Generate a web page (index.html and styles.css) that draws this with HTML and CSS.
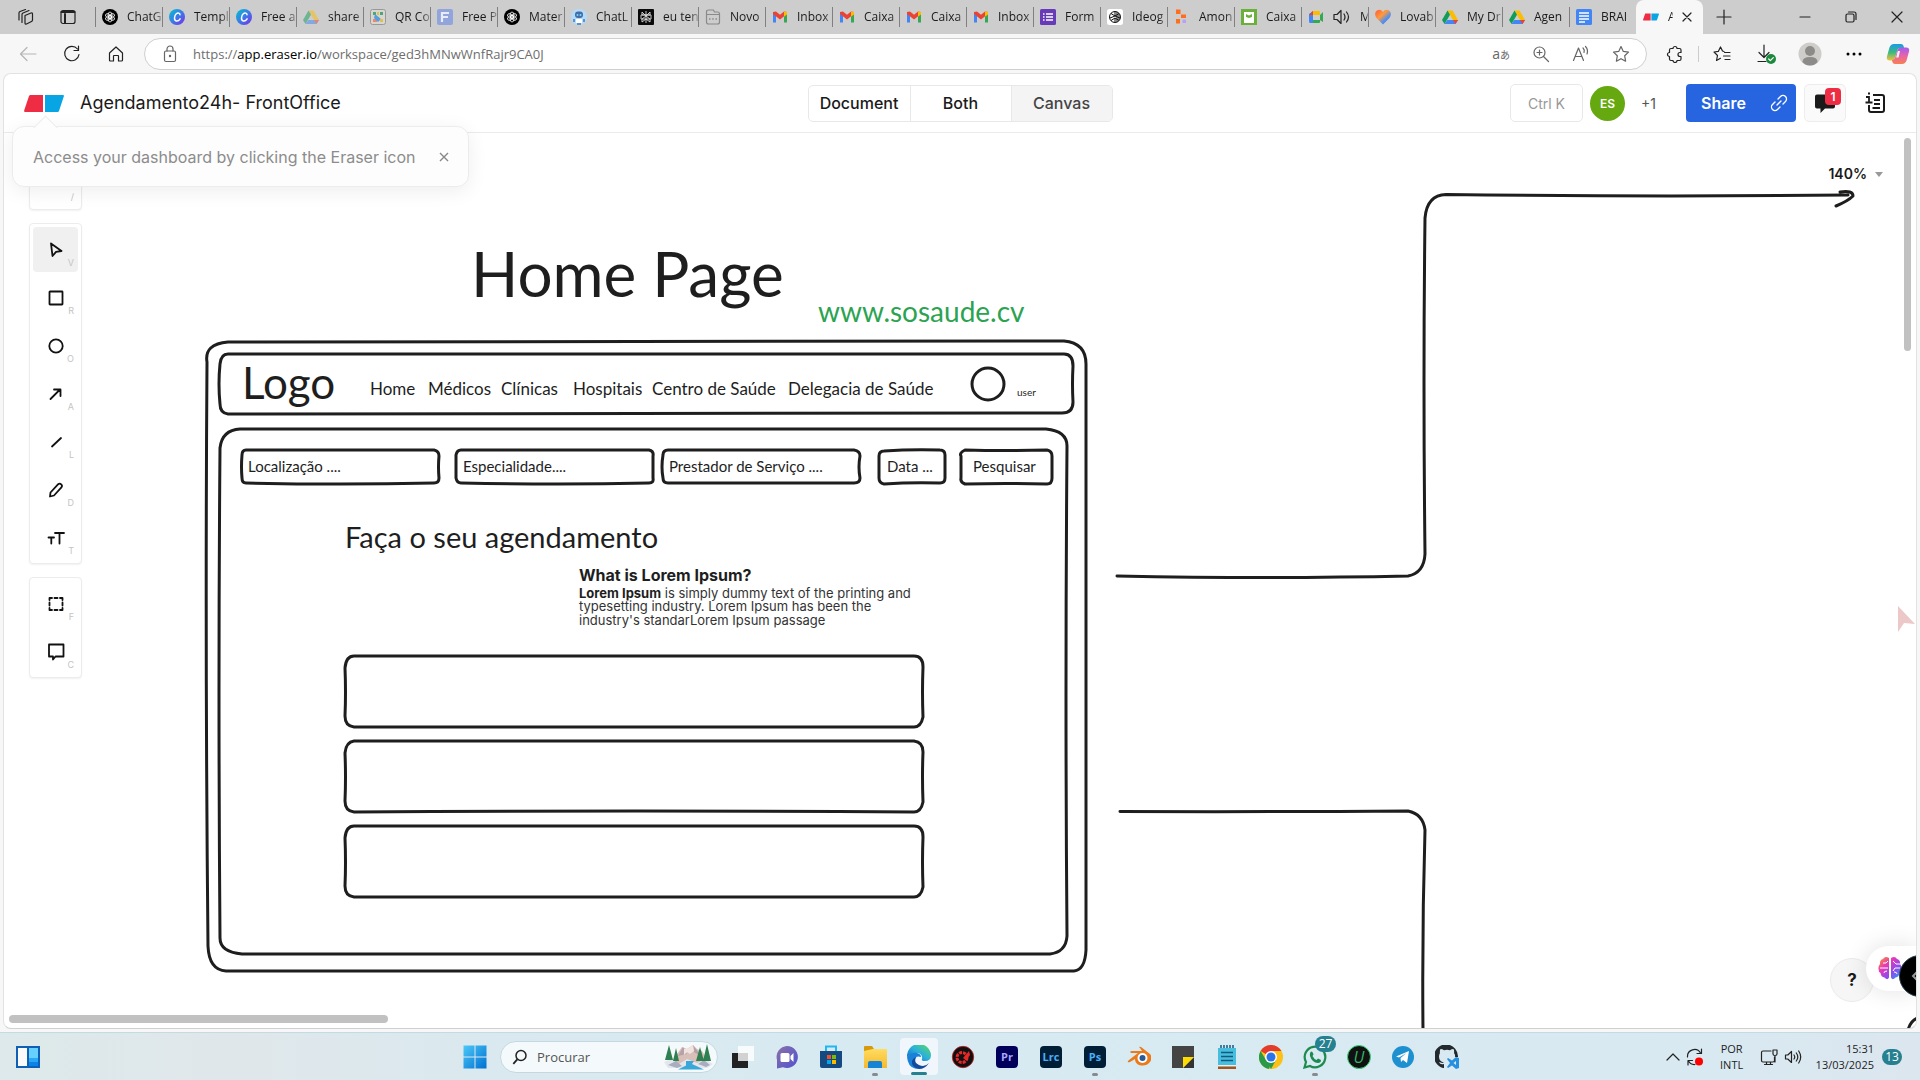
FILE: index.html
```html
<!DOCTYPE html>
<html lang="pt">
<head>
<meta charset="utf-8">
<meta name="viewport" content="width=device-width, initial-scale=1">
<title>Agendamento24h- FrontOffice</title>
<link rel="stylesheet" href="styles.css">
</head>
<body>
<svg class="defs" aria-hidden="true">
  <defs>
    <linearGradient id="g-canva" x1="0" y1="0" x2="1" y2="1"><stop offset="0" stop-color="#00c4cc"/><stop offset=".5" stop-color="#3b7be8"/><stop offset="1" stop-color="#7d2ae8"/></linearGradient>
    <linearGradient id="g-heart" x1="0" y1="0" x2="1" y2="1"><stop offset="0" stop-color="#ff5a3a"/><stop offset=".4" stop-color="#ff9a3a"/><stop offset=".65" stop-color="#5a90e8"/><stop offset="1" stop-color="#2f7de8"/></linearGradient>
    <linearGradient id="g-win" x1="0" y1="0" x2="1" y2="1"><stop offset="0" stop-color="#4cc8f8"/><stop offset="1" stop-color="#0070d0"/></linearGradient>
    <linearGradient id="g-cop-a" x1="0" y1="0" x2="0" y2="1"><stop offset="0" stop-color="#1a9be8"/><stop offset=".5" stop-color="#3aba80"/><stop offset="1" stop-color="#f4c23a"/></linearGradient>
    <linearGradient id="g-cop-b" x1="0" y1="0" x2="0" y2="1"><stop offset="0" stop-color="#a05cf0"/><stop offset=".5" stop-color="#e864a8"/><stop offset="1" stop-color="#f88050"/></linearGradient>
    <linearGradient id="g-brain" x1="0" y1="0" x2="1" y2="1"><stop offset="0" stop-color="#ff9a1f"/><stop offset=".35" stop-color="#e838b8"/><stop offset=".65" stop-color="#8a4af0"/><stop offset="1" stop-color="#22a8f8"/></linearGradient>
    <linearGradient id="g-edge" x1="0" y1="1" x2="1" y2="0"><stop offset="0" stop-color="#0c62c4"/><stop offset=".5" stop-color="#2bb0dc"/><stop offset="1" stop-color="#5ade5a"/></linearGradient>
    <linearGradient id="g-chat" x1="0" y1="0" x2="1" y2="1"><stop offset="0" stop-color="#8a70a8"/><stop offset="1" stop-color="#4f52d0"/></linearGradient>
    <linearGradient id="g-folder" x1="0" y1="0" x2="0" y2="1"><stop offset="0" stop-color="#ffdc60"/><stop offset="1" stop-color="#f5b92c"/></linearGradient>
    <symbol id="openai" viewBox="0 0 16 16"><circle cx="8" cy="8" r="8" fill="#000"/><g fill="none" stroke="#fff" stroke-width=".8"><ellipse cx="8" cy="6.2" rx="2" ry="3.2"/><ellipse cx="8" cy="9.8" rx="2" ry="3.2"/><ellipse cx="8" cy="6.2" rx="2" ry="3.2" transform="rotate(60 8 8)"/><ellipse cx="8" cy="6.2" rx="2" ry="3.2" transform="rotate(120 8 8)"/><ellipse cx="8" cy="6.2" rx="2" ry="3.2" transform="rotate(240 8 8)"/><ellipse cx="8" cy="6.2" rx="2" ry="3.2" transform="rotate(300 8 8)"/></g></symbol>
    <symbol id="canva" viewBox="0 0 16 16"><circle cx="8" cy="8" r="8" fill="url(#g-canva)"/><path d="M11 5.800C11 4 8.900 3.400 7.300 4.800 5 6.800 4.800 11.500 7.300 12c1.700.3 3-.9 3.800-2.200" fill="none" stroke="#fff" stroke-width="1.500" stroke-linecap="round"/></symbol>
    <symbol id="drive" viewBox="0 0 16 16"><path d="M5.500 1.500h5L16 11h-5z" fill="#fbbc04"/><path d="M5.500 1.500 8 5.800 2.500 15 0 11z" fill="#0f9d58"/><path d="M5.300 11H16l-2.500 4h-11z" fill="#4285f4"/><path d="M11 11h5l-2.500 4z" fill="#ea4335"/></symbol>
    <symbol id="gmail" viewBox="0 0 16 16"><path d="M1 4v9.500h3V6.500z" fill="#4285f4"/><path d="M15 4v9.500h-3V6.500z" fill="#34a853"/><path d="m1 3 3-.5 4 3.300 4-3.300 3 .5v2L8 10.500 1 5z" fill="#ea4335"/><path d="m12 2.500 3 .5v2.500l-3 2.300z" fill="#fbbc04"/></symbol>
    <symbol id="eraser" viewBox="0 0 40 17"><path d="M6 0h13v17H1Q-.3 17 .3 15L5 1z" fill="#ee2d45"/><path d="M21 0h18q1.300 0 .8 1.500L35 16q-.3 1-1.500 1H21z" fill="#08a5e5"/></symbol>
  </defs>
</svg>

<div class="tabstrip">
  <button class="strip-btn" aria-label="Workspaces"><svg viewBox="0 0 18 18" class="i18 line"><path d="M8 7.500 14 5q1.500-.5 1.500 1v6q0 1-1 1.500L9.500 16Q8 16.500 8 15zM5 14.500v-8q0-1 1-1.500l6-2.500M2 12V5q0-1 1-1.500l5.500-2"/></svg></button>
  <button class="strip-btn" aria-label="Vertical tabs"><svg viewBox="0 0 18 18" class="i18 line"><rect x="2" y="2.500" width="14" height="13" rx="2"/><path d="M6 6v9M2.500 4h13" stroke-width="2"/></svg></button>
  <nav class="tabs" aria-label="Tabs">
    <button class="tab"><svg class="fav"><use href="#openai"/></svg><span>ChatG</span></button>
    <button class="tab"><svg class="fav"><use href="#canva"/></svg><span>Templ</span></button>
    <button class="tab"><svg class="fav"><use href="#canva"/></svg><span>Free a</span></button>
    <button class="tab"><svg class="fav dim"><use href="#drive"/></svg><span>share</span></button>
    <button class="tab"><svg class="fav" viewBox="0 0 16 16"><rect x=".5" y=".5" width="15" height="15" rx="2" fill="#d9d5cf" stroke="#999"/><path d="M3 3h3v3H3zM10 3h3v3h-3z" fill="#4aa77a"/><path d="M3 10h4v3H3z" fill="#e88a6a"/><path d="m5 5 6 5-3 3-4-4z" fill="#559ee0"/><path d="M10 10h3v3h-3zM7 3h2v3H7z" fill="#e0c050"/></svg><span>QR Co</span></button>
    <button class="tab"><svg class="fav" viewBox="0 0 16 16"><rect width="16" height="16" rx="2" fill="#91a4dc"/><path d="M5 13V4h7M5 8h6" stroke="#e8ecfa" stroke-width="2.200" fill="none"/></svg><span>Free P</span></button>
    <button class="tab"><svg class="fav"><use href="#openai"/></svg><span>Mater</span></button>
    <button class="tab"><svg class="fav" viewBox="0 0 16 16"><circle cx="8" cy="8" r="8" fill="#b4dcf8"/><rect x="4" y="2.500" width="8" height="6.500" rx="3" fill="#456ba8"/><path d="M5 10h6v4H5z" fill="#fff"/><circle cx="6.500" cy="6" r="1" fill="#7df"/><circle cx="9.500" cy="6" r="1" fill="#7df"/><path d="M3 10v3M13 10v3M6 15h4" stroke="#3a78c8" stroke-width="1.500"/></svg><span>ChatL</span></button>
    <button class="tab"><svg class="fav" viewBox="0 0 16 16"><rect width="16" height="16" rx="1" fill="#0a0a0a"/><path d="M8 2v12M4 3l4 4 4-4v3H4zM3 6h10v4H3zM4 13v-3l4-3 4 3v3l-4-3z" fill="none" stroke="#ddd" stroke-width=".9"/></svg><span>eu ten</span></button>
    <button class="tab"><svg class="fav" viewBox="0 0 16 16"><g fill="none" stroke="#8a8a8a" stroke-width="1.200"><path d="M3.500 1h5l1 2h3Q14.500 3 14.500 5v8q0 2-2 2h-9q-2 0-2-2V3q0-2 2-2zM1.500 5.500h13"/><path d="M4 10h1.500M7.200 10h1.500M10.500 10H12" stroke-width="1.600"/></g></svg><span>Novo</span></button>
    <button class="tab"><svg class="fav"><use href="#gmail"/></svg><span>Inbox</span></button>
    <button class="tab"><svg class="fav"><use href="#gmail"/></svg><span>Caixa</span></button>
    <button class="tab"><svg class="fav"><use href="#gmail"/></svg><span>Caixa</span></button>
    <button class="tab"><svg class="fav"><use href="#gmail"/></svg><span>Inbox</span></button>
    <button class="tab"><svg class="fav" viewBox="0 0 16 16"><rect width="16" height="16" rx="1.500" fill="#673ab7"/><path d="M3 5h1.500M3 8h1.500M3 11h1.500M6 5h7M6 8h7M6 11h7" stroke="#fff" stroke-width="1.600"/></svg><span>Form</span></button>
    <button class="tab"><svg class="fav" viewBox="0 0 16 16"><rect width="16" height="16" rx="2.500" fill="#fff"/><g fill="none" stroke="#111" stroke-width="1"><circle cx="8" cy="8" r="5.500"/><path d="M4 4.500 8 7l4-2.500M8 2.500V7M3 9l5-2 5 2M8 13.500V9l4 2.500M8 9l-4 2.500M10 3v10M12 5v6"/></g></svg><span>Ideog</span></button>
    <button class="tab"><svg class="fav" viewBox="0 0 16 16"><path d="M2 .5h4.500V5H2zM7 5.500h5V9H7zM2 10h4v4.500H2z" fill="#ff6d1f"/><path d="M8.500 10.500H12V14H8.500z" fill="#b8a0f8"/></svg><span>Amon</span></button>
    <button class="tab"><svg class="fav" viewBox="0 0 16 16"><rect width="16" height="16" fill="#6ab03a"/><rect x="3" y="3" width="10" height="11" fill="#fff"/><path d="m5 5 3 1.500 3-1.500v3L8 9 5 8z" fill="#6ab03a"/></svg><span>Caixa</span></button>
    <button class="tab"><svg class="fav" viewBox="0 0 16 16"><path d="M1 5l4-3h6v3H5v9H2.500Q1 14 1 12.500z" fill="#4285f4"/><path d="M5 2h6q1 0 1 1v3H5z" fill="#fbbc04"/><path d="M5 2v4H1z" fill="#ea4335"/><path d="M5 11h7l3 2V3l-3 3v7q0 1-1 1H5z" fill="#34a853"/></svg><svg class="speaker line" viewBox="0 0 18 16"><path d="M1 5.500h3l4-4v13l-4-4H1zM11 5q2 3 0 6M13.500 3q4 5 0 10"/></svg><span>M</span></button>
    <button class="tab"><svg class="fav" viewBox="0 0 16 16"><path d="M8 15.500 1.500 9Q-1.500 4 2 1.500 5.500-.5 8 3q2.500-3.500 6-1.500 3.500 2.500.5 7.500z" fill="url(#g-heart)"/></svg><span>Lovab</span></button>
    <button class="tab"><svg class="fav"><use href="#drive"/></svg><span>My Dr</span></button>
    <button class="tab"><svg class="fav"><use href="#drive"/></svg><span>Agen</span></button>
    <button class="tab"><svg class="fav" viewBox="0 0 16 16"><rect width="16" height="16" rx="1.500" fill="#4285f4"/><path d="M3 4h10M3 7h10M3 10h10M3 13h6" stroke="#fff" stroke-width="1.400"/></svg><span>BRAI</span></button>
    <button class="tab active"><svg class="fav"><use href="#eraser"/></svg><span>A</span><svg class="tab-close line" viewBox="0 0 10 10"><path d="m1 1 8 8M9 1 1 9"/></svg></button>
  </nav>
  <button class="strip-btn plus" aria-label="New tab"><svg viewBox="0 0 18 18" class="i18 line"><path d="M9 2v14M2 9h14"/></svg></button>
  <div class="window-controls">
    <button aria-label="Minimize"><svg viewBox="0 0 12 12" class="i12 line"><path d="M1 6h10"/></svg></button>
    <button aria-label="Restore"><svg viewBox="0 0 12 12" class="i12 line"><rect x="1" y="3" width="8" height="8" rx="1.500"/><path d="M3.500 1H9q2 0 2 2v5.500"/></svg></button>
    <button aria-label="Close"><svg viewBox="0 0 12 12" class="i12 line"><path d="m1 1 10 10M11 1 1 11"/></svg></button>
  </div>
</div>

<div class="browserbar">
  <button aria-label="Back" class="faded"><svg viewBox="0 0 18 18" class="i18 line"><path d="M17 9H1.500M8 2.500 1.500 9 8 15.500"/></svg></button>
  <button aria-label="Refresh"><svg viewBox="0 0 18 18" class="i18 line"><path d="M16 9.500A7.200 7.200 0 1 1 14.500 4M15.500 1v4.500H11"/></svg></button>
  <button aria-label="Home"><svg viewBox="0 0 18 18" class="i18 line"><path d="M2.500 8 9 2l6.500 6v7q0 1-1 1h-3v-5q0-.5-.5-.5H7q-.5 0-.5.500v5h-3q-1 0-1-1z"/></svg></button>
  <div class="address">
    <svg viewBox="0 0 14 18" class="lock line"><rect x="1.500" y="6" width="11" height="10.500" rx="1.500"/><path d="M4 6V4a3 3 0 0 1 6 0v2"/><circle cx="7" cy="11" r=".6" fill="#555"/></svg>
    <a class="url" href="https://app.eraser.io/workspace/ged3hMNwWnfRajr9CA0J">https://<b>app.eraser.io</b>/workspace/ged3hMNwWnfRajr9CA0J</a>
    <button aria-label="Translate" class="glyph">a<small>あ</small></button>
    <button aria-label="Zoom"><svg viewBox="0 0 18 18" class="i18 line"><circle cx="7.500" cy="7.500" r="5.500"/><path d="m11.500 11.500 5 5M7.500 5v5M5 7.500h5"/></svg></button>
    <button aria-label="Read aloud"><svg viewBox="0 0 18 18" class="i18 line"><path d="M1.500 15.500 6.500 3l5 12.500M3.300 11.500h6.400M11 3q2 2 1 4.500M13.500 1.500q3 3 1.500 7.500"/></svg></button>
    <button aria-label="Favorite"><svg viewBox="0 0 18 18" class="i18 line"><path d="m9 1.500 2.300 4.900 5.200.7-3.800 3.700.9 5.400L9 13.700l-4.600 2.500.9-5.400L1.500 7.100l5.200-.7z"/></svg></button>
  </div>
  <div class="extras">
    <button aria-label="Extensions"><svg viewBox="0 0 18 18" class="i18 line dark"><path d="M5 3.500h2a2 2 0 0 1 4 0h2.500q1.500 0 1.500 1.500v2.500h-1a2 2 0 0 0 0 4h1V14q0 1.500-1.500 1.500H11a2 2 0 0 1-4 0H5q-1.500 0-1.500-1.500v-2.500a2 2 0 0 1 0-4V5q0-1.500 1.500-1.500z"/></svg></button>
    <i class="rule"></i>
    <button aria-label="Favorites"><svg viewBox="0 0 18 18" class="i18 line dark"><path d="M11 6.500 9.500 6 7.500 2 5.300 6.400 1 7l3.500 3.500-1 5 4-2.200M11.500 7.500H17M10.500 11H17M12 14.500h5"/></svg></button>
    <button aria-label="Downloads"><svg viewBox="0 0 20 20" class="i20 line dark"><path d="M8 1v12M3 8.500 8 13.500l5-5M2 17.500h8"/><circle cx="15" cy="15" r="5" fill="#1b8a3d" stroke="none"/><path d="m12.700 15 1.600 1.600 3-3" stroke="#fff"/></svg></button>
    <button aria-label="Profile"><svg viewBox="0 0 24 24" class="i24"><circle cx="12" cy="12" r="11.500" fill="#cfcdca"/><circle cx="12" cy="9" r="5" fill="#8d8b89"/><path d="M4.500 20q0-5 7.500-5t7.500 5q-3 3.500-7.500 3.500T4.500 20z" fill="#8d8b89"/></svg></button>
    <button aria-label="Menu"><svg viewBox="0 0 18 18" class="i18"><circle cx="3" cy="9" r="1.500"/><circle cx="9" cy="9" r="1.500"/><circle cx="15" cy="9" r="1.500"/></svg></button>
    <button aria-label="Copilot"><svg viewBox="0 0 24 24" class="i24"><path d="M8 2h7q2 0 2.700 2.200L18 6h-4q-2 0-2.600 2L9 16q-.8 2.500-3 2.500H4q-4 0-3-4L3.300 6Q4.500 2 8 2z" fill="url(#g-cop-a)"/><path d="M16 22H9q-2 0-2.700-2.200L6 18q2.400 0 3-2l2.400-8q.8-2.500 3-2.500H20q4 0 3 4L20.700 18q-1.200 4-4.700 4z" fill="url(#g-cop-b)"/><path d="m11.800 9-1.600 6.500h2.300L14 9z" fill="#f7f7f7"/></svg></button>
  </div>
</div>

<main class="page">
  <header class="app-header">
    <div class="brand">
      <a href="#dashboard" aria-label="Eraser"><svg class="logo"><use href="#eraser"/></svg></a>
      <h1>Agendamento24h- FrontOffice</h1>
      <div class="hint" role="status">
        <span>Access your dashboard by clicking the Eraser icon</span>
        <button aria-label="Dismiss"><svg viewBox="0 0 10 10" class="i10"><path d="m1 1 8 8M9 1 1 9" stroke="#888" stroke-width="1.400"/></svg></button>
      </div>
    </div>
    <div class="segmented">
      <button>Document</button><button>Both</button><button class="on">Canvas</button>
    </div>
    <div class="actions">
      <button class="kbd">Ctrl K</button>
      <span class="person">ES</span>
      <span class="more">+1</span>
      <button class="share"><span>Share</span><svg viewBox="0 0 18 18" class="i18"><path d="m7 11 4-4M8 5l2.500-2.500a3.200 3.200 0 0 1 5 5L13 10M10 13l-2.500 2.500a3.200 3.200 0 0 1-5-5L5 8" fill="none" stroke="#fff" stroke-width="1.300" stroke-linecap="round"/></svg></button>
      <button class="comments" aria-label="Comments"><svg viewBox="0 0 22 22" class="i22"><path d="M3 2.500h16q2 0 2 2v10q0 2-2 2H11L6.500 21v-4.500H3q-2 0-2-2v-10q0-2 2-2z" fill="#1a1a1a"/></svg><span class="count">1</span></button>
      <button class="info" aria-label="Info"><svg viewBox="0 0 22 22" class="i22"><path d="M9 3h9q2 0 2 2v13q0 2-2 2H7q-2 0-2-2v-5M10 8h6M10 12h6M8.500 16H16" fill="none" stroke="#1a1a1a" stroke-width="2"/><path d="M2 5h3v5M1.500 10.500h7M4 1.500h2" fill="none" stroke="#1a1a1a" stroke-width="1.800"/></svg></button>
    </div>
  </header>

  <section class="canvas">
    <svg class="board" viewBox="4 133 1912 895">
      <g class="ink">
        <path d="M228 342 Q640 340 1064 341 Q1086 343 1086 364 Q1085 660 1086 950 Q1085 970 1074 971 Q640 972 226 971 Q209 970 208 946 Q205 650 207 362 Q204 344 228 342z"/>
        <path d="M228 354H1064Q1073 354 1073 366Q1072 384 1073 402Q1073 413 1062 413Q640 413 228 414Q220 413 220 404Q218 384 220 364Q221 354 228 354z"/>
        <path d="M240 429Q650 428 1046 429Q1067 431 1067 446Q1065 700 1067 936Q1066 952 1050 954Q640 955 242 954Q220 952 220 938Q218 690 220 448Q222 430 240 429z"/>
        <path d="M246 450H434Q439 451 439 456Q438 467 439 478Q439 483 434 483Q340 485 246 483Q242 483 242 478Q241 467 242 455Q242 450 246 450z"/>
        <path d="M461 450H649Q654 451 653 456V478Q654 483 649 483Q560 485 461 483Q457 483 456 478V455Q457 450 461 450z"/>
        <path d="M668 450H854Q860 451 860 456Q858 467 860 478Q860 483 854 483H668Q663 483 663 478Q661 467 663 455Q663 450 668 450z"/>
        <path d="M884 451Q912 449 940 450Q945 450 945 455V478Q945 483 940 483Q912 482 884 484Q879 483 879 478V456Q879 451 884 451z"/>
        <path d="M965 450Q1005 451 1047 450Q1052 451 1052 456V478Q1052 484 1047 484Q1005 483 965 484Q960 482 961 478V456Q959 453 965 450z"/>
        <circle cx="988" cy="384" r="16"/>
        <path d="M354 656H914Q923 656 923 667Q922 692 923 717Q921 727 914 727H354Q345 726 345 716Q346 692 345 668Q346 656 354 656z"/>
        <path d="M354 741H914Q923 742 923 752Q922 777 923 802Q921 812 914 812Q640 810 354 812Q345 811 345 801Q346 777 345 753Q346 742 354 741z"/>
        <path d="M354 826H914Q923 826 923 837Q922 862 923 887Q921 897 914 897H354Q345 896 345 886Q346 862 345 838Q346 826 354 826z"/>
        <path d="M1117 576Q1270 579 1408 576Q1424 573 1425 554Q1423 380 1425 218Q1427 195 1446 194.500Q1650 197 1848 195M1840 192Q1853 190 1853 196 1848 201 1836 206"/>
        <path d="M1120 811.500Q1260 812 1408 811Q1423 814 1425 830Q1422 930 1423 1030M1908 1030Q1911 1020 1918 1018"/>
      </g>
      <g class="hand">
        <text class="t62" x="471" y="297">Home Page</text>
        <text class="t28 green" x="818" y="322">www.sosaude.cv</text>
        <text class="t44" x="242" y="399">Logo</text>
        <text class="t17" x="370" y="395">Home</text>
        <text class="t17" x="428" y="395">Médicos</text>
        <text class="t17" x="501" y="395">Clínicas</text>
        <text class="t17" x="573" y="395">Hospitais</text>
        <text class="t17" x="652" y="395">Centro de Saúde</text>
        <text class="t17" x="788" y="395">Delegacia de Saúde</text>
        <text class="t10" x="1017" y="396">user</text>
        <text class="t15" x="248" y="472">Localização ....</text>
        <text class="t15" x="463" y="472">Especialidade....</text>
        <text class="t15" x="669" y="472">Prestador de Serviço ....</text>
        <text class="t15" x="887" y="472">Data ...</text>
        <text class="t15" x="973" y="472">Pesquisar</text>
        <text class="t29" x="345" y="548">Faça o seu agendamento</text>
      </g>
      <g class="note">
        <text class="note-title" x="579" y="581">What is Lorem Ipsum?</text>
        <text x="579" y="598"><tspan class="strong">Lorem Ipsum</tspan> is simply dummy text of the printing and</text>
        <text x="579" y="611">typesetting industry. Lorem Ipsum has been the</text>
        <text x="579" y="625">industry's standarLorem Ipsum passage</text>
      </g>
      <path d="M1898 606 1915 624 1904 623 1898 632z" fill="#ecc8c9"/>
    </svg>

    <aside class="rail" aria-label="Tools">
      <div class="toolbox">
        <button aria-label="Insert"><svg viewBox="0 0 18 18" class="i18 tool"><path d="M9 1v10M4 6h10"/></svg><kbd>/</kbd></button>
      </div>
      <div class="toolbox">
        <button class="on" aria-label="Select"><svg viewBox="0 0 18 18" class="i18 tool"><path d="m4 2.500 10.500 7.500-5.500.8L5.500 15z"/></svg><kbd>V</kbd></button>
        <button aria-label="Rectangle"><svg viewBox="0 0 18 18" class="i18 tool"><rect x="2.500" y="2.500" width="13" height="13" rx=".5"/></svg><kbd>R</kbd></button>
        <button aria-label="Ellipse"><svg viewBox="0 0 18 18" class="i18 tool"><circle cx="9" cy="9" r="6.700"/></svg><kbd>O</kbd></button>
        <button aria-label="Arrow"><svg viewBox="0 0 18 18" class="i18 tool"><path d="m3.500 14 9.500-9.500M7 4.500h6.500V11"/></svg><kbd>A</kbd></button>
        <button aria-label="Line"><svg viewBox="0 0 18 18" class="i18 tool"><path d="m5 13.500 9-8.500"/></svg><kbd>L</kbd></button>
        <button aria-label="Draw"><svg viewBox="0 0 18 18" class="i18 tool"><path d="m3 15.500.5-4L11.200 3.200q1.500-1.200 3 .2t.2 3L7 14.500z"/></svg><kbd>D</kbd></button>
        <button aria-label="Text"><svg viewBox="0 0 18 18" class="i18 tool"><path d="M8 4h9M12.500 4v10.500M1.500 8.500H7M4.300 8.500v6"/></svg><kbd>T</kbd></button>
      </div>
      <div class="toolbox">
        <button aria-label="Figure"><svg viewBox="0 0 18 18" class="i18 tool"><path d="M2.500 5V3H5M7.500 3h3M13 3h2.500v2M15.500 7.500v3M15.500 13v2H13M10.500 15h-3M5 15H2.500v-2M2.500 10.500v-3"/></svg><kbd>F</kbd></button>
        <button aria-label="Comment"><svg viewBox="0 0 18 18" class="i18 tool"><path d="M2 1.500h14.500v12H8.500L6 16.500v-3H2z"/></svg><kbd>C</kbd></button>
      </div>
    </aside>

    <button class="zoom">140% <span class="caret"></span></button>
    <div class="scroll-y"></div>
    <div class="scroll-x"></div>
    <button class="help">?</button>
    <div class="brain"><svg viewBox="0 0 24 24" class="i24"><path d="M11 2Q7-.5 5 3 1.500 4 2 8q-2 2.500-1.500 5 0 3 2 4 .5 4 4 4.500 3 3.500 4.500 0zM13 2q4-2.500 6 1 3.500 1 3 5 2 2.500 1.500 5 0 3-2 4-.5 4-4 4.500-3 3.500-4.500 0z" fill="url(#g-brain)"/><path d="M2 12h8M5 7h3l2-2M6 17q0-2 3-2M22 8h-4l-3-3M22 12h-5l-2 3M19 18q0-2-3-2" fill="none" stroke="#fff"/></svg></div>
    <button class="drawer" aria-label="Open panel"><svg viewBox="0 0 18 18" class="i18"><path d="M10 3 4 9l6 6" fill="none" stroke="#999" stroke-width="2"/></svg></button>
  </section>
</main>

<footer class="taskbar">
  <div class="task-left"><button class="app" aria-label="Widgets"><svg viewBox="0 0 24 24" class="i24"><path d="M0 1h24v22H0z" fill="#0f5fb4"/><path d="M2 3h9v18H2z" fill="#fafafa"/><path d="M13 3h9v10h-9z" fill="#66d0ff"/><path d="M13 13h9v4h-9z" fill="#2aa8f5"/><path d="M13 17h9v4h-9z" fill="#0a84e8"/></svg></button></div>
  <div class="apps">
    <button class="app" aria-label="Start"><svg viewBox="0 0 24 24" class="i24"><path d="M.5.5h11v11H.5zM12.500.5h11v11h-11zM.5 12.500h11v11H.5zM12.500 12.500h11v11h-11z" fill="url(#g-win)"/></svg></button>
    <label class="search"><svg viewBox="0 0 16 16" class="i16"><circle cx="9" cy="6.500" r="5" fill="none" stroke="#222" stroke-width="1.500"/><path d="m5.300 10.300-4 4.500" stroke="#222" stroke-width="1.800"/></svg><input type="text" placeholder="Procurar" aria-label="Procurar">
      <svg class="scene" viewBox="0 0 49 26"><path d="M6 20 18 3l5 2 6-4 4 4 5 2 8 13z" fill="#d8bfb8"/><path d="m14 12 5-9 4 7zM29 1l9 12-8-5z" fill="#b8a0a8"/><path d="m20 5 3 0 6-4 1 6-4 3-3-2-3 3z" fill="#f0e4e0"/><path d="m0 18 7-3 8 5 8-5 10 4 8-4 8 5-6 4H4z" fill="#e4e6ee"/><path d="m4 21 8-4 6 5-5 2zM34 20l6-4 6 5-4 2z" fill="#a8adc0"/><path d="M22 17h8l-2 3 12 5.500H14l8-4z" fill="#39a8d8"/><g fill="#2f8050"><path d="m5 1 4 15H1zM12 4l3 13H9zM36 3l4 14h-8zM43 0l4 17h-8z"/></g></svg></label>
    <button class="app" aria-label="Task view"><svg viewBox="0 0 24 24" class="i24"><rect x="1" y="8" width="16" height="15" fill="#222"/><rect x="7" y="1" width="16" height="15" fill="#fff" opacity=".8"/></svg></button>
    <button class="app" aria-label="Chat"><svg viewBox="0 0 24 24" class="i24"><path d="M12 1a11 11 0 1 1-4 21.300L2 23.500V15A11 11 0 0 1 12 1z" fill="url(#g-chat)"/><rect x="5.500" y="8" width="9" height="9" rx="1.500" fill="#fff"/><path d="m15.500 11 3-3v9l-3-3z" fill="#fff"/></svg></button>
    <button class="app" aria-label="Store"><svg viewBox="0 0 24 24" class="i24"><path d="M7 7V1.500h10V7" fill="none" stroke="#20b8f0" stroke-width="2"/><path d="M1 6h22v15q0 2-2 2H3q-2 0-2-2z" fill="#154a80"/><path d="M8 10h4v4H8z" fill="#f25022"/><path d="M13 10h4v4h-4z" fill="#7fba00"/><path d="M8 15h4v4H8z" fill="#00a4ef"/><path d="M13 15h4v4h-4z" fill="#ffb900"/></svg></button>
    <button class="app running" aria-label="Explorer"><svg viewBox="0 0 24 24" class="i24"><path d="M1 2q0-1 1-1h7l2 3v4H1z" fill="#d69a0c"/><path d="M1 6l9-2h13q1 0 1 1v18H1z" fill="url(#g-folder)"/><path d="M5 23v-5q0-2 2-2h10q2 0 2 2v5z" fill="#1583d6"/></svg></button>
    <button class="app current" aria-label="Edge"><svg viewBox="0 0 24 24" class="i24"><path d="M0 12A12 12 0 0 1 24 10q0 6-6 6-4 0-3-2 1-5-5-6-6 0-10 4z" fill="url(#g-edge)"/><path d="M0 12Q4 7 10 8q4 1 4 4-6-2-6 4 1 5 8 6-4 2.500-8 1.500Q1 22 0 12z" fill="#1a80d8"/><path d="M9 12q-3 5 3 8 6 2.500 10-2-4 6-10 6Q4 22 5 16q1-3 4-4z" fill="#124a9c"/></svg></button>
    <button class="app" aria-label="Recorder"><svg viewBox="0 0 24 24" class="i24"><circle cx="12" cy="12" r="10.700" fill="#111" stroke="#c42020" stroke-width=".8"/><circle cx="11" cy="12.500" r="5" fill="none" stroke="#e82828" stroke-width="3" stroke-dasharray="3 1"/><path d="m12 13 6-7 1 4-4 5z" fill="#e82828"/></svg></button>
    <button class="app" aria-label="Premiere"><span class="adobe pr">Pr</span></button>
    <button class="app" aria-label="Lightroom"><span class="adobe">Lrc</span></button>
    <button class="app running" aria-label="Photoshop"><span class="adobe">Ps</span></button>
    <button class="app" aria-label="Blender"><svg viewBox="0 0 24 24" class="i24"><path d="M13 3q-2-2 1-1l9 7q3 4 0 8-4 5-11 3-4-2-4-6l-5 3q-4 1-1-2l9-7H4q-2-2 1-2h10z" fill="#ea7a1a"/><circle cx="15.500" cy="13" r="5" fill="#fff"/><circle cx="15.500" cy="13" r="3" fill="#285a98"/></svg></button>
    <button class="app" aria-label="Sticky notes"><svg viewBox="0 0 24 24" class="i24"><path d="M1 1h22v11l-11 11H1z" fill="#444"/><path d="M23 12v11H12z" fill="#333"/><path d="M12 12h11L12 23z" fill="#ffdc00"/></svg></button>
    <button class="app" aria-label="Notepad"><svg viewBox="0 0 24 24" class="i24"><path d="M3 3h18v17H3z" fill="#48bede"/><path d="M3 20h18v1H3z" fill="#eee"/><path d="M3 21.500h18V24H3z" fill="#a4541a"/><path d="M6 7.500h12M6 11.500h12M6 15.500h12" stroke="#125a80" stroke-width="1.500"/><path d="M6 0v3M9 0v3M12 0v3M15 0v3M18 0v3" stroke="#125a80" stroke-width="1.500"/></svg></button>
    <button class="app" aria-label="Chrome"><svg viewBox="0 0 24 24" class="i24"><circle cx="12" cy="12" r="12" fill="#fbc116"/><path d="M12 12 1.600 6A12 12 0 0 1 22.400 6H12z" fill="#e33b2e"/><path d="M1.600 6 7 15l5 3-2 6A12 12 0 0 1 1.600 6z" fill="#2a9a48"/><path d="M12 24 17 15H7z" fill="#2a9a48"/><circle cx="12" cy="12" r="6" fill="#fff"/><circle cx="12" cy="12" r="4.500" fill="#2a74e8"/></svg></button>
    <button class="app running" aria-label="WhatsApp"><svg viewBox="0 0 24 24" class="i24"><path d="M1.500 22.500 3 17A10.300 10.300 0 1 1 7 21z" fill="none" stroke="#1d8a4e" stroke-width="2.200"/><path d="M7.500 7q1.500-1.500 2.500 1l.5 1.500-1 1.500q1.500 3 4 4l1.500-1.500 3 1.500q0 3-3 3-6-.5-8-7-.5-2 .5-4z" fill="#1d8a4e"/></svg><span class="badge">27</span></button>
    <button class="app" aria-label="Uninstaller"><span class="round-u">U</span></button>
    <button class="app" aria-label="Telegram"><svg viewBox="0 0 24 24" class="i24"><circle cx="12" cy="12" r="11" fill="#1e90d0"/><path d="m5 11.500 13-5.500-2 12-4-3-2 2-.5-4 6-5-7.500 4.500z" fill="#fff"/></svg></button>
    <button class="app" aria-label="GitHub"><svg viewBox="0 0 24 24" class="i24"><path d="M9 23v-4q-4 1-5-2 2 .5 3 1l2-.5q-5-1-5-6 0-2 1-3.500Q4.500 6 5.500 4q2 0 3.500 1.200 3-.8 6 0Q16.500 4 18.500 4q1 2 .5 4 1.500 2 1 4h3A12 12 0 1 0 8 23z" fill="#24292e"/><path d="m21 12 3 1v10l-3 1-4-3.500-4 2.500-1-1 3-4-3-4 1-1 4 2.500zm0 4-2.500 2 2.500 2z" fill="#2590e0" fill-rule="evenodd"/></svg></button>
  </div>
  <div class="tray">
    <button aria-label="Hidden icons"><svg viewBox="0 0 14 14" class="i14 line dark"><path d="m1 10 6-6 6 6"/></svg></button>
    <button aria-label="Update"><svg viewBox="0 0 18 18" class="i18 line dark"><path d="M1.500 9a7 7 0 0 1 13-4M15.500 1v4.500H11M2 17v-4.500h4.500M2.500 13Q5 17 9 16.500"/><circle cx="13" cy="13.500" r="4" fill="red" stroke="none"/></svg></button>
    <button class="lang">POR<br>INTL</button>
    <button aria-label="Network"><svg viewBox="0 0 18 18" class="i18 line dark"><path d="M11 3H3Q1.500 3 1.500 4.500v8Q1.500 14 3 14h10q1.500 0 1.500-1.500V9M4.500 16.500h8M6.500 14v2.500M10.500 14v2.500M13 2h4v4q0 1.500-2 1.500T13 6zM15 8v6"/></svg></button>
    <button aria-label="Volume"><svg viewBox="0 0 18 18" class="i18 line dark"><path d="M1.500 7h2.300L7.500 3.500v11L3.800 11H1.500zM10 7q1.500 2 0 4M12.300 5q3 4 0 8M14.700 3q4 6 0 12"/></svg></button>
    <button class="clock">15:31<br>13/03/2025</button>
    <span class="notices">13</span>
  </div>
</footer>
</body>
</html>
```

FILE: styles.css
```css
* { box-sizing: border-box; }

body {
  margin: 0;
  height: 100vh;
  display: flex;
  flex-direction: column;
  overflow: hidden;
  background: #f7f7f7;
  color: #1a1a1a;
  font-family: "Open Sans", "Noto Sans CJK JP", sans-serif;
}

button {
  margin: 0;
  padding: 0;
  border: 0;
  background: none;
  color: inherit;
  font: inherit;
}

.defs { position: absolute; width: 0; height: 0; }

.line { fill: none; stroke: #222; stroke-width: 1.2; stroke-linejoin: round; stroke-linecap: round; }
.i10 { width: 10px; height: 10px; }
.i12 { width: 12px; height: 12px; }
.i14 { width: 14px; height: 14px; }
.i16 { width: 16px; height: 16px; }
.i18 { width: 18px; height: 18px; }
.i20 { width: 20px; height: 20px; }
.i22 { width: 22px; height: 22px; }
.i24 { width: 24px; height: 24px; }
svg { display: block; flex: none; }

/* Tab strip */
.tabstrip {
  flex: none;
  display: flex;
  align-items: stretch;
  height: 34px;
  background: #cdcdcd;
}
.strip-btn { display: grid; place-items: center; width: 42px; padding-left: 10px; }
.strip-btn.plus { padding: 0; }
.tabs { display: flex; flex: 0 1 1608px; min-width: 0; margin-left: 11px; }
.tab {
  display: flex;
  align-items: center;
  gap: 9px;
  flex: 1 1 67px;
  min-width: 0;
  overflow: hidden;
  padding-left: 7px;
  background: linear-gradient(#808080, #808080) left center / 1px 20px no-repeat;
  font-size: 12px;
  line-height: 20px;
}
.tab span {
  flex: 1;
  min-width: 0;
  text-align: left;
  white-space: nowrap;
  mask-image: linear-gradient(90deg, #000 75%, rgba(0, 0, 0, .3));
}
.fav { width: 16px; height: 16px; }
.fav.dim { opacity: .5; }
.speaker { width: 18px; height: 16px; }
.tab.active { background: #f7f7f7; border-radius: 8px 8px 0 0; padding-right: 11px; }
.tab-close { width: 10px; height: 10px; }
.window-controls { display: flex; margin-left: auto; }
.window-controls button { display: grid; place-items: center; width: 46px; }

/* Address row */
.browserbar {
  flex: none;
  display: flex;
  align-items: center;
  height: 39px;
  padding: 0 8px 0 10px;
}
.browserbar > button { display: grid; place-items: center; width: 44px; padding-right: 8px; }
.browserbar > button.faded { opacity: .3; }
.address {
  flex: 1;
  display: flex;
  align-items: center;
  gap: 22px;
  height: 32px;
  margin-left: 2px;
  padding: 0 16px 0 18px;
  border: 1px solid #cfcfcf;
  border-radius: 16px;
  background: #fff;
}
.address .line { stroke: #666; }
.address .lock { width: 14px; height: 18px; margin-right: -6px; }
.url { flex: 1; color: #6e6e6e; font-size: 13px; text-decoration: none; }
.url b { color: #000; font-weight: 400; }
.glyph { color: #666; font-size: 14px; }
.glyph small { font-size: 10px; }
.extras { display: flex; align-items: center; gap: 16px; margin-left: 14px; }
.extras button { display: grid; place-items: center; width: 28px; }
.extras .rule { width: 1px; height: 16px; background: #ccc; margin: 0 -7px; }

/* Eraser page */
.page {
  flex: 1;
  min-height: 0;
  display: flex;
  flex-direction: column;
  margin: 0 3px 3px;
  border: 1px solid #e2e2e2;
  border-bottom-color: #d0d0d0;
  border-radius: 8px;
  overflow: hidden;
  background: #fff;
  font-family: Inter, sans-serif;
}
.app-header {
  position: relative;
  z-index: 2;
  flex: none;
  display: grid;
  grid-template-columns: 1fr auto 1fr;
  align-items: center;
  height: 59px;
  padding: 0 20px;
  border-bottom: 1px solid #ebebeb;
}
.brand { position: relative; display: flex; align-items: center; gap: 16px; }
.logo { width: 40px; height: 17px; }
.brand h1 { margin: 0; font-size: 18px; font-weight: 400; line-height: 24px; }
.hint {
  position: absolute;
  top: 35px;
  left: -12px;
  display: flex;
  align-items: center;
  gap: 18px;
  height: 61px;
  padding: 0 14px 0 20px;
  border: 1px solid #ececec;
  border-radius: 12px;
  background: #fdfdfd;
  box-shadow: 0 4px 20px rgba(0, 0, 0, .07);
  color: #8c8c8c;
  font-size: 16px;
  white-space: nowrap;
}
.hint::before {
  content: "";
  position: absolute;
  top: -8px;
  left: 24px;
  width: 16px;
  height: 16px;
  border: 1px solid #ececec;
  border-width: 1px 0 0 1px;
  background: #fdfdfd;
  transform: rotate(45deg);
}
.hint button { display: grid; place-items: center; width: 20px; height: 20px; }
.segmented {
  display: grid;
  grid-template-columns: repeat(3, 1fr);
  width: 305px;
  height: 37px;
  border: 1px solid #e8e8e8;
  border-radius: 5px;
  overflow: hidden;
  font-size: 16px;
  font-weight: 500;
}
.segmented button + button { border-left: 1px solid #e8e8e8; }
.segmented .on { background: #f4f4f4; color: #444; }
.actions { display: flex; align-items: center; justify-content: flex-end; }
.kbd {
  width: 73px;
  height: 38px;
  border: 1px solid #e8e8e8;
  border-radius: 5px;
  color: #999;
  font-size: 14px;
}
.person {
  display: grid;
  place-items: center;
  width: 35px;
  height: 35px;
  margin-left: 7px;
  border-radius: 50%;
  background: #65a80f;
  color: #fff;
  font-size: 12px;
  font-weight: 600;
}
.more { width: 47px; text-align: center; color: #555; font-size: 14px; }
.share {
  display: flex;
  align-items: center;
  justify-content: space-between;
  width: 110px;
  height: 38px;
  margin-left: 14px;
  padding: 0 8px 0 15px;
  border-radius: 4px;
  background: #2665df;
  color: #fff;
  font-size: 16px;
  font-weight: 600;
}
.comments {
  position: relative;
  display: grid;
  place-items: center;
  width: 42px;
  height: 38px;
  margin-left: 8px;
  border: 1px solid #ededed;
  border-radius: 5px;
  background: #fafafa;
}
.count {
  position: absolute;
  top: 3px;
  right: 4px;
  width: 16px;
  height: 17px;
  border-radius: 4px;
  background: #ee2d45;
  color: #fff;
  font-size: 12px;
  font-weight: 600;
  line-height: 17px;
}
.info { display: grid; place-items: center; width: 42px; margin-left: 8px; }

/* Drawing surface */
.canvas { position: relative; flex: 1; min-height: 0; overflow: hidden; }
.board { width: 1912px; height: 895px; }
.ink { fill: none; stroke: #1e1e1e; stroke-width: 3; stroke-linecap: round; stroke-linejoin: round; }
.hand { fill: #1e1e1e; font-family: Lato, sans-serif; }
.t62 { font-size: 62px; }
.t44 { font-size: 44px; }
.t29 { font-size: 29px; }
.t28 { font-size: 28px; }
.t17 { font-size: 17px; }
.t15 { font-size: 15px; }
.t10 { font-size: 10px; }
.green { fill: #2ba350; }
.note { fill: #333; font-size: 13px; }
.note-title { fill: #1e1e1e; font-size: 16px; font-weight: 700; }
.strong { fill: #1e1e1e; font-weight: 700; }

.rail {
  position: absolute;
  top: 17px;
  left: 25px;
  display: flex;
  flex-direction: column;
  gap: 13px;
}
.toolbox {
  display: flex;
  flex-direction: column;
  gap: 3px;
  padding: 3px;
  border: 1px solid #ececec;
  border-radius: 4px;
  background: #fff;
  box-shadow: 0 1px 2px rgba(0, 0, 0, .06);
}
.toolbox:first-child { padding-top: 10px; }
.toolbox button {
  position: relative;
  display: grid;
  place-items: center;
  width: 45px;
  height: 45px;
  border-radius: 4px;
}
.toolbox button.on { background: #f0f0f0; }
.tool { fill: none; stroke: #111; stroke-width: 1.8; stroke-linejoin: round; stroke-linecap: round; }
.toolbox kbd {
  position: absolute;
  right: 4px;
  bottom: 3px;
  color: #c4c4c4;
  font: 9px/12px Inter, sans-serif;
}

.zoom {
  position: absolute;
  top: 31px;
  right: 33px;
  display: flex;
  align-items: center;
  gap: 8px;
  font-size: 14px;
  font-weight: 600;
  line-height: 20px;
}
.caret { border: 4px solid transparent; border-top: 5px solid #999; border-bottom: 0; }
.scroll-y { position: absolute; top: 5px; right: 5px; width: 7px; height: 213px; border-radius: 4px; background: #c1c1c1; }
.scroll-x { position: absolute; left: 5px; bottom: 5px; width: 379px; height: 8px; border-radius: 4px; background: #c1c1c1; }
.help {
  position: absolute;
  right: 42px;
  bottom: 26px;
  width: 44px;
  height: 44px;
  border: 1px solid #ebebeb;
  border-radius: 50%;
  background: #f6f6f6;
  font-size: 17px;
  font-weight: 700;
}
.brain {
  position: absolute;
  right: 0;
  bottom: 37px;
  width: 50px;
  height: 45px;
  padding: 10px 0 0 12px;
  border-radius: 23px 0 0 23px;
  background: #fff;
  box-shadow: 0 0 24px rgba(0, 0, 0, .12);
}
.drawer {
  position: absolute;
  right: -25px;
  bottom: 31px;
  display: grid;
  align-items: center;
  width: 42px;
  height: 42px;
  padding-left: 9px;
  border: 1px solid #26404c;
  border-radius: 50%;
  background: #000;
}

/* Taskbar */
.taskbar {
  flex: none;
  display: grid;
  grid-template-columns: 1fr auto 1fr;
  align-items: center;
  height: 48px;
  border-top: 1px solid #c4dbe4;
  background: linear-gradient(90deg, #dde9ea, #e0e7ea 12%, #dae9ef 25%, #d7eaf2 50%, #d9e9f1 90%, #dce6ef);
}
.task-left { padding-left: 6px; }
.apps { display: flex; align-items: center; padding-left: 2px; }
.app { position: relative; display: grid; place-items: center; width: 44px; height: 47px; }
.current::before {
  content: "";
  position: absolute;
  inset: 5px 3px;
  z-index: -1;
  border-radius: 4px;
  background: #f0f6fb;
}
.app.current { z-index: 0; }
.running::after,
.current::after {
  content: "";
  position: absolute;
  left: 50%;
  bottom: 4px;
  width: 6px;
  height: 3px;
  margin-left: -3px;
  border-radius: 2px;
  background: #858b8f;
}
.current::after { width: 16px; margin-left: -8px; bottom: 5px; background: #25808f; }
.search {
  display: flex;
  align-items: center;
  width: 218px;
  height: 32px;
  margin: 0 3px;
  padding: 0 4px 0 11px;
  border: 1px solid #c5d8df;
  border-radius: 16px;
  background: #f4fafc;
}
.search input {
  flex: 1;
  min-width: 0;
  margin-left: 9px;
  padding: 0;
  border: 0;
  outline: 0;
  background: none;
  color: #555;
  font: 13px/20px "Open Sans", sans-serif;
}
.search input::placeholder { color: #555; opacity: 1; }
.scene { width: 49px; height: 26px; }
.adobe {
  display: grid;
  place-items: center;
  width: 22px;
  height: 22px;
  border-radius: 4px;
  background: #001e36;
  color: #4aaefc;
  font-size: 11px;
  font-weight: 700;
}
.adobe.pr { background: #00005b; color: #a9a4fc; }
.badge {
  position: absolute;
  top: 3px;
  right: 1px;
  width: 21px;
  height: 16px;
  border-radius: 8px;
  background: #258090;
  color: #fff;
  font-size: 12px;
  line-height: 16px;
}
.round-u {
  display: grid;
  place-items: center;
  width: 24px;
  height: 24px;
  border: 1px solid #35dc78;
  border-radius: 50%;
  background: #111;
  color: #2fb866;
  font-size: 16px;
  font-style: italic;
}
.tray {
  display: flex;
  align-items: center;
  justify-content: flex-end;
  gap: 6px;
  padding-right: 18px;
  color: #222;
  font-size: 11px;
  line-height: 16px;
}
.tray .lang { width: 44px; text-align: center; }
.tray .clock { margin: 0 0 0 8px; padding-right: 2px; text-align: right; }
.tray > button { flex: none; }
.notices {
  width: 20px;
  height: 16px;
  border-radius: 8px;
  background: #258090;
  color: #fff;
  font-size: 12px;
  text-align: center;
}
```
